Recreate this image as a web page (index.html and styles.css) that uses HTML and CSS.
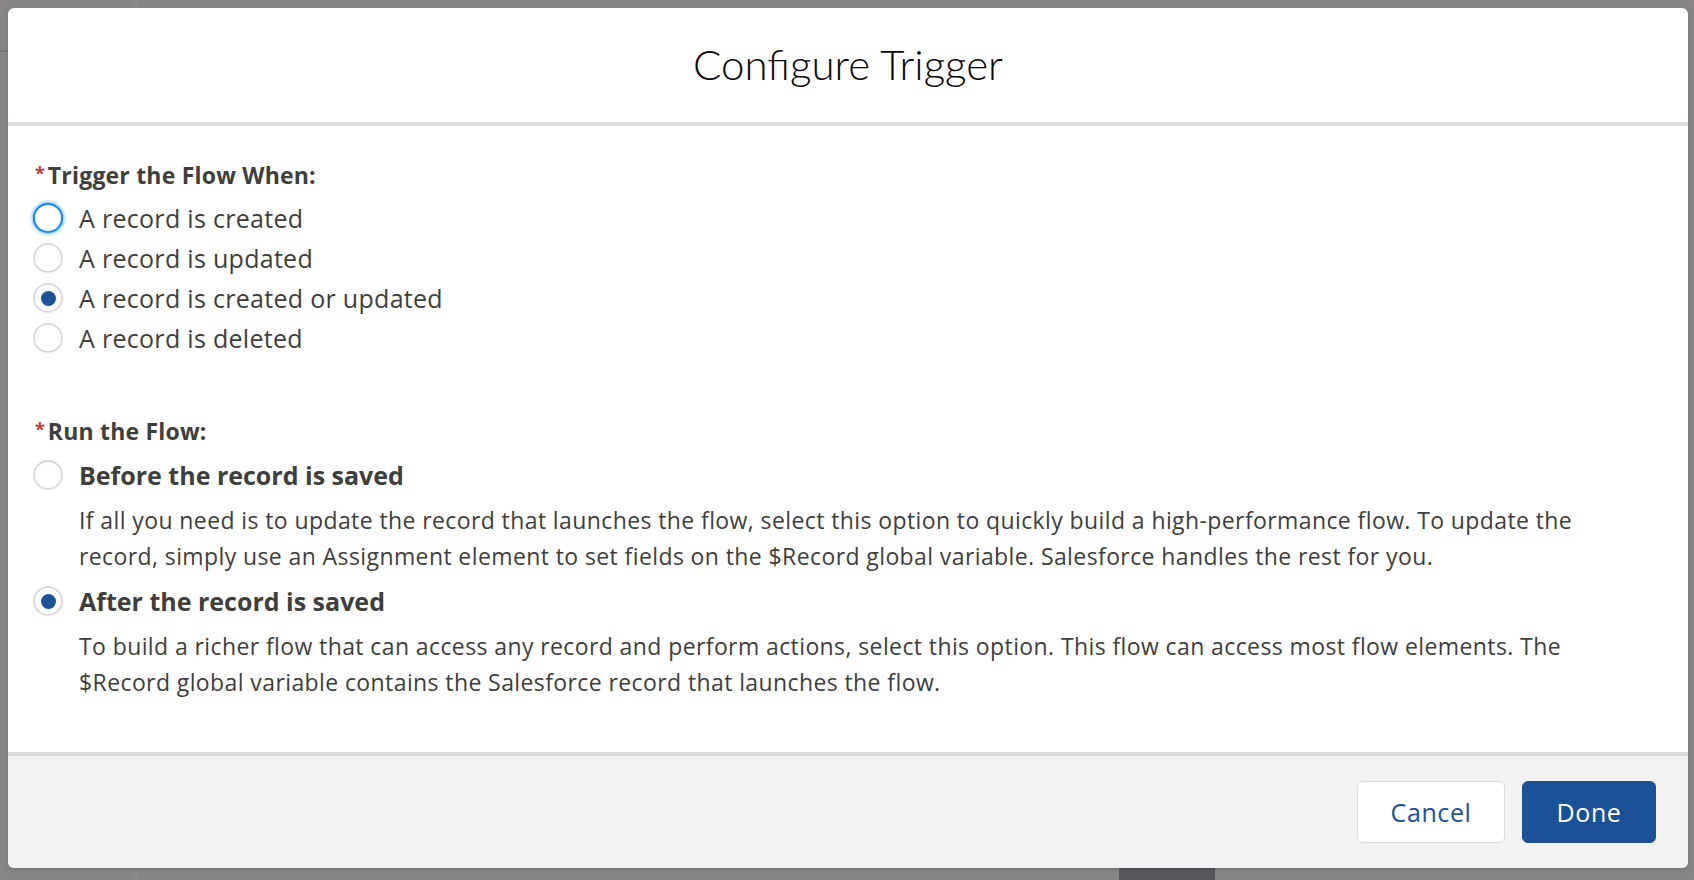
FILE: index.html
```html
<!DOCTYPE html>
<html lang="en">
<head>
<meta charset="utf-8">
<title>Configure Trigger</title>
<link rel="stylesheet" href="styles.css">
</head>
<body>
<div class="backdrop-line-v"></div>
<div class="backdrop-line-h"></div>
<div class="backdrop-box"></div>
<section class="modal">
  <header class="modal-header">
    <h1 class="modal-title">Configure Trigger</h1>
  </header>
  <div class="modal-body">
    <fieldset class="group">
      <legend class="group-label"><abbr class="req">*</abbr>Trigger the Flow When:</legend>
      <div class="option">
        <span class="radio radio-focus"></span>
        <span class="option-label">A record is created</span>
      </div>
      <div class="option">
        <span class="radio"></span>
        <span class="option-label">A record is updated</span>
      </div>
      <div class="option">
        <span class="radio radio-checked"></span>
        <span class="option-label">A record is created or updated</span>
      </div>
      <div class="option">
        <span class="radio"></span>
        <span class="option-label">A record is deleted</span>
      </div>
    </fieldset>
    <fieldset class="group group-run">
      <legend class="group-label"><abbr class="req">*</abbr>Run the Flow:</legend>
      <div class="option option-strong">
        <span class="radio"></span>
        <span class="option-label">Before the record is saved</span>
      </div>
      <p class="option-desc">If all you need is to update the record that launches the flow, select this option to quickly build a high-performance flow. To update the record, simply use an Assignment element to set fields on the $Record global variable. Salesforce handles the rest for you.</p>
      <div class="option option-strong">
        <span class="radio radio-checked"></span>
        <span class="option-label">After the record is saved</span>
      </div>
      <p class="option-desc">To build a richer flow that can access any record and perform actions, select this option. This flow can access most flow elements. The $Record global variable contains the Salesforce record that launches the flow.</p>
    </fieldset>
  </div>
  <footer class="modal-footer">
    <button class="btn btn-neutral">Cancel</button>
    <button class="btn btn-brand">Done</button>
  </footer>
</section>
</body>
</html>
```
FILE: styles.css
```css
* { box-sizing: border-box; }
html, body { margin: 0; height: 100%; }
body {
  background: #878586;
  padding: 8px 6px 12px 8px;
  font-family: "Open Sans", "Liberation Sans", sans-serif;
  color: #3e3e3c;
  overflow: hidden;
  position: relative;
}
.backdrop-line-v {
  position: absolute; left: 135px; top: 0; width: 3px; height: 100%;
  background: #8c8a8b;
}
.backdrop-line-h {
  position: absolute; left: 0; top: 50px; width: 8px; height: 2px;
  background: #7b797a;
}
.backdrop-box {
  position: absolute; left: 1119px; bottom: 0; width: 96px; height: 12px;
  background: #55575c;
}
.modal {
  position: relative;
  width: 1680px;
  height: 860px;
  background: #fff;
  border-radius: 6px;
  display: flex;
  flex-direction: column;
  overflow: hidden;
  box-shadow: 0 2px 4px rgba(0,0,0,0.12);
}
.modal-header {
  height: 118px;
  border-bottom: 4px solid #dddbda;
  display: flex;
  align-items: center;
  justify-content: center;
  flex: none;
}
.modal-title {
  margin: 0;
  font-family: "Lato", "Open Sans", sans-serif;
  font-weight: 300;
  font-size: 42px;
  color: #080707;
  line-height: 1;
  padding-bottom: 2px;
}
.modal-body {
  flex: 1;
  padding: 34px 25px 0 25px;
}
.group {
  border: 0;
  margin: 0;
  padding: 0;
}
.group-label {
  padding: 0;
  font-weight: 700;
  font-size: 23px;
  letter-spacing: 0.2px;
  line-height: 30px;
  height: 30px;
  margin-bottom: 8px;
  color: #3e3e3c;
  display: block;
}
.req {
  color: #c23934;
  text-decoration: none;
  font-size: 18px;
  font-weight: 700;
  vertical-align: top;
  line-height: 26px;
  margin-right: 3px;
  margin-left: 2px;
  letter-spacing: 0;
}
.option {
  display: flex;
  align-items: center;
  height: 40px;
  gap: 16px;
}
.option-label {
  font-size: 25px;
  letter-spacing: 0.3px;
  line-height: 30px;
  color: #3e3e3c;
}
.option-strong .option-label {
  font-weight: 700;
  letter-spacing: 0;
}
.radio {
  flex: none;
  width: 30px;
  height: 30px;
  border-radius: 50%;
  border: 2px solid #dddbda;
  background: #fff;
  display: flex;
  align-items: center;
  justify-content: center;
}
.radio-focus {
  border-color: #1589ee;
  box-shadow: 0 0 4px #1589ee;
}
.radio-checked::after {
  content: "";
  width: 15px;
  height: 15px;
  border-radius: 50%;
  background: #1b5297;
}
.group-run {
  margin-top: 58px;
}
.group-run .group-label { margin-bottom: 9px; }
.option-desc {
  margin: 7px 50px 7px 46px;
  font-size: 23px;
  letter-spacing: 0.4px;
  line-height: 36px;
  color: #3e3e3c;
}
.modal-footer {
  flex: none;
  height: 116px;
  border-top: 4px solid #dddbda;
  background: #f3f2f2;
  display: flex;
  justify-content: flex-end;
  align-items: center;
  gap: 17px;
  padding: 0 32px;
}
.btn {
  height: 62px;
  border-radius: 6px;
  font-family: inherit;
  font-size: 25px;
  letter-spacing: 0.6px;
  cursor: pointer;
}
.btn-neutral {
  width: 148px;
  background: #fff;
  border: 1px solid #dddbda;
  color: #1b5297;
}
.btn-brand {
  width: 134px;
  background: #1b5297;
  border: 1px solid #1b5297;
  color: #fff;
}
```
